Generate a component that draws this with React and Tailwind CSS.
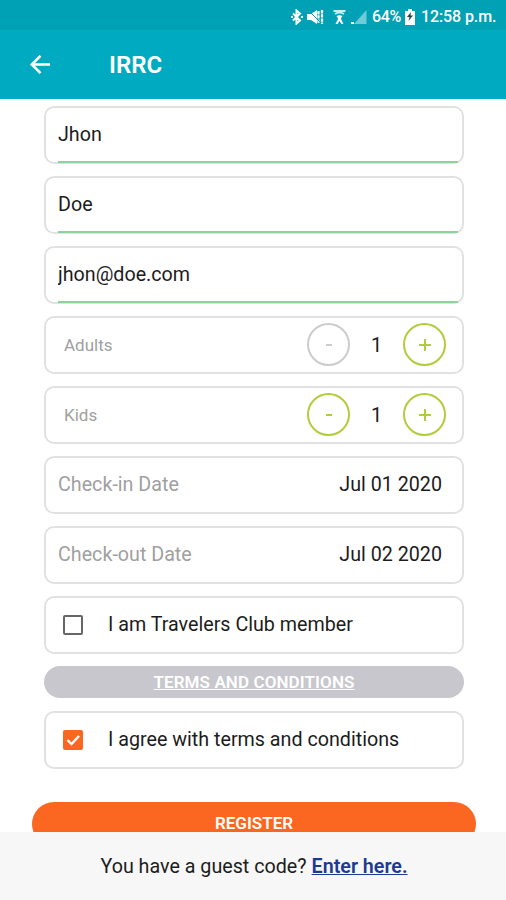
import React, { useState } from "react"

const initialFields = [
  { id: "firstName", value: "Jhon" },
  { id: "lastName", value: "Doe" },
  { id: "email", value: "jhon@doe.com" },
]

const StatusBar = () => (
  <div className="flex h-[30px] items-center justify-end bg-[#00a1b5] pt-[3px] pr-[9px] text-white">
    <svg width="12" height="16" viewBox="0 0 12 16" fill="none" stroke="currentColor" strokeWidth="2">
      <path d="M2 4.5l7 7-3.500 3V1.500L9 4.500l-7 7" />
      <path d="M0 8h1.800M10 8h1.800" />
    </svg>
    <svg className="ml-1" width="17" height="16" viewBox="0 0 17 16" fill="currentColor">
      <path d="M0 5h4l6-4v14l-6-4H0z" />
      <path d="M11.500 2v12M15 1v14" stroke="currentColor" strokeWidth="2.200" strokeDasharray="3.400 .8" />
      <path d="M1 1l13 13" stroke="#00a1b5" strokeWidth="1" />
    </svg>
    <svg className="ml-[9px]" width="13" height="16" viewBox="0 0 13 16" fill="none" stroke="currentColor">
      <path d="M.5 2h12M2 5q4.500-3 9 0M4 8q2.500-2 5 0" strokeWidth="1.800" opacity=".8" />
      <path d="M4.500 7h4L8 10l2.500 5h-2L6.500 12 4.500 15h-2L5 10z" fill="currentColor" stroke="none" />
    </svg>
    <svg className="ml-[5px]" width="16" height="16" viewBox="0 0 16 16">
      <path d="M15.500 1v14H3z" fill="#6fcbd7" />
      <path d="M0 13h3v2H0z" fill="#fff" />
    </svg>
    <span className="ml-[5px] w-[29px] whitespace-nowrap text-[16px] font-medium leading-none tracking-[-0.4px]">64%</span>
    <svg className="ml-[4px]" width="10" height="16" viewBox="0 0 10 16">
      <path d="M3 0h4v2h3v14H0V2h3z" fill="#fff" />
      <path d="M6 3L2 8h2.500L3.500 12 8 6.500H5.500z" fill="#24464c" />
    </svg>
    <span className="ml-[6px] w-[76px] whitespace-nowrap text-[16px] font-medium leading-none tracking-[-0.1px]">12:58 p.m.</span>
  </div>
)

const Header = ({ title }) => (
  <header className="flex h-[69px] items-center bg-[#00abc1] pl-[30px] text-white">
    <button aria-label="Back">
      <svg width="21" height="20" viewBox="0 0 21 20" fill="none" stroke="currentColor" strokeWidth="2.600">
        <path d="M20 9.500H2M10.500.8L1.800 9.500l8.700 8.700" />
      </svg>
    </button>
    <h1 className="ml-[58px] text-[24px] font-semibold">{title}</h1>
  </header>
)

const Card = ({ className = "", children }) => (
  <div className={`flex h-[58px] items-center rounded-[10px] border-2 border-[#e1e1e1] bg-white ${className}`}>
    {children}
  </div>
)

const RoundButton = ({ disabled, onClick, label, children }) => (
  <button
    aria-label={label}
    disabled={disabled}
    onClick={onClick}
    className={`flex size-[43px] items-center justify-center rounded-full border-2 ${
      disabled ? "border-[#cccccc] text-[#cccccc]" : "border-[#b2cd3c] text-[#b2cd3c]"
    }`}
  >
    {children}
  </button>
)

const Counter = ({ label, min }) => {
  const [count, setCount] = useState(1)

  return (
    <Card className="pl-[18px] pr-[16px] pb-[1px]">
      <span className="flex-1 pt-[2px] text-[17px] text-[#a0a0a0]">{label}</span>
      <RoundButton label={`Less ${label}`} disabled={count <= min} onClick={() => setCount(count - 1)}>
        <span className="h-[2px] w-[6px] bg-current" />
      </RoundButton>
      <span className="w-[53px] text-center text-[20px]">{count}</span>
      <RoundButton label={`More ${label}`} onClick={() => setCount(count + 1)}>
        <svg width="12" height="12" viewBox="0 0 12 12" stroke="currentColor" strokeWidth="2">
          <path d="M6 0v12M0 6h12" />
        </svg>
      </RoundButton>
    </Card>
  )
}

const DateRow = ({ label, value }) => (
  <Card className="justify-between pl-[12px] pr-[20px]">
    <span className="text-[#a0a0a0]">{label}</span>
    <span>{value}</span>
  </Card>
)

const CheckRow = ({ label, checked, onChange }) => (
  <Card>
    <button className="flex items-center pl-[17px]" role="checkbox" aria-checked={checked} onClick={() => onChange(!checked)}>
      {checked ? (
        <svg width="20" height="20" viewBox="0 0 20 20">
          <rect width="20" height="20" rx="2" fill="#fb6620" />
          <path d="M4.500 10l4 4 7.500-8" fill="none" stroke="#fff" strokeWidth="2.400" />
        </svg>
      ) : (
        <span className="size-[20px] rounded-[2px] border-2 border-[#666666]" />
      )}
      <span className="ml-[25px] whitespace-nowrap">{label}</span>
    </button>
  </Card>
)

export default function App() {
  const [fields, setFields] = useState(initialFields)
  const [member, setMember] = useState(false)
  const [agree, setAgree] = useState(true)

  const handleChange = (id, value) => {
    setFields((prev) => prev.map((f) => (f.id === id ? { ...f, value } : f)))
  }

  return (
    <div className="flex h-[900px] w-[506px] flex-col overflow-hidden bg-white font-['Roboto',sans-serif] text-[19.7px] text-[#1c1c1c]">
      <StatusBar />
      <Header title="IRRC" />

      <main className="flex min-h-0 flex-1 flex-col overflow-hidden pt-[7px]">
        <div className="ml-[44px] flex w-[420px] shrink-0 flex-col">
          <div className="flex flex-col gap-[12px]">
            {fields.map((f) => (
              <Card key={f.id} className="items-stretch pl-[12px] pr-[4px]">
                <input
                  className="-mb-[1px] w-full border-b-2 border-[#8ed29c] bg-transparent pt-[1px] outline-none"
                  value={f.value}
                  onChange={(e) => handleChange(f.id, e.target.value)}
                />
              </Card>
            ))}
            <Counter label="Adults" min={1} />
            <Counter label="Kids" min={0} />
            <DateRow label="Check-in Date" value="Jul 01 2020" />
            <DateRow label="Check-out Date" value="Jul 02 2020" />
            <CheckRow label="I am Travelers Club member" checked={member} onChange={setMember} />
          </div>

          <button className="mt-[12px] mb-[13px] h-[32px] rounded-full bg-[#c8c7cd] pt-[1px] text-[17px] font-semibold tracking-[0.1px] text-white underline">
            TERMS AND CONDITIONS
          </button>
          <CheckRow label="I agree with terms and conditions" checked={agree} onChange={setAgree} />
        </div>

        <button className="ml-[32px] mt-[33px] flex h-[44px] w-[444px] shrink-0 items-start justify-center rounded-full bg-[#fb6620] pt-[13px] text-[17px] font-semibold leading-[17px] text-white">
          REGISTER
        </button>
      </main>

      <footer className="flex h-[68px] shrink-0 items-center justify-center gap-[5px] bg-[#f7f7f7] pl-[2px] pt-[2px]">
        <span>You have a guest code?</span>
        <a href="#guest" className="font-semibold text-[#1b3a93] underline">Enter here.</a>
      </footer>
    </div>
  )
}
